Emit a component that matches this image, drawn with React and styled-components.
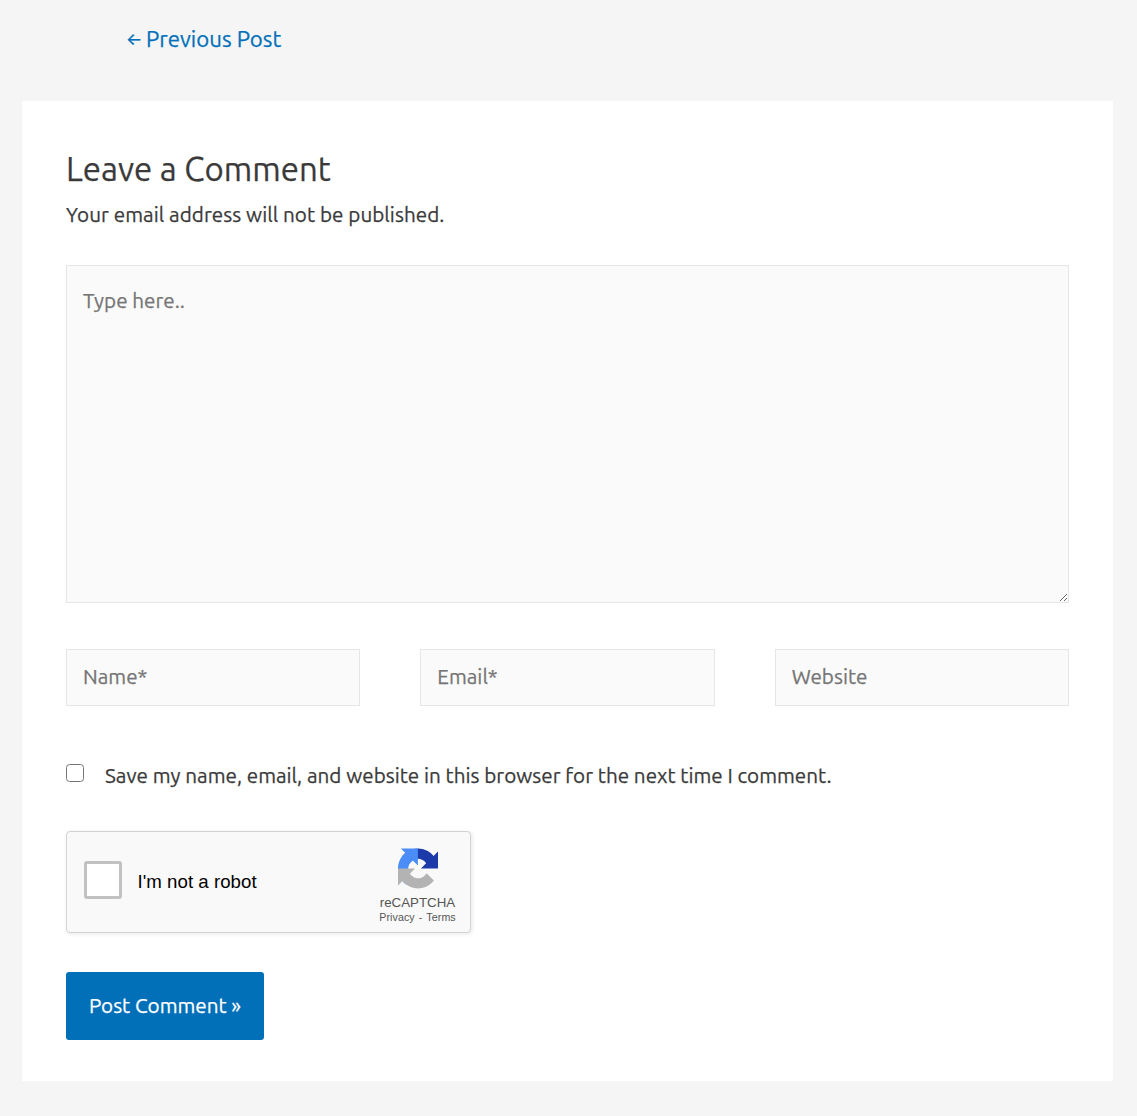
import React from "react";
import styled, { createGlobalStyle } from "styled-components";

const GlobalStyle = createGlobalStyle`
  *, *::before, *::after { box-sizing: border-box; }
  body {
    margin: 0;
    background: #f5f5f5;
    color: #3a3a3a;
    font-family: Ubuntu, "Noto Sans", sans-serif;
    font-size: 20.67px;
    line-height: 36px;
    -webkit-text-stroke: 0.25px;
  }
`;

const Page = styled.div`
  min-height: 1116px;
  padding: 20px 24px 35px 22px;
`;

const PostNavigation = styled.nav`
  height: 81px;
  padding-left: 104px;
`;

const PreviousLink = styled.a`
  display: flex;
  gap: 6px;
  color: #0170b9;
  font-size: 22.2px;
  line-height: 38px;
  letter-spacing: 0.03px;
  text-decoration: none;
  white-space: nowrap;
`;

const Arrow = styled.span`
  width: 14px;
  font-family: Inter, sans-serif;
  font-size: 17px;
`;

const Card = styled.section`
  height: 980px;
  padding: 46px 44px 41px;
  background: #fff;
`;

const Title = styled.h3`
  margin: 0 0 6px;
  font-size: 33px;
  font-weight: 400;
  line-height: 44px;
`;

const Notice = styled.p`
  margin: 0 0 32px;
  letter-spacing: 0.05px;
`;

const Form = styled.form`
  display: flex;
  flex-direction: column;
  align-items: flex-start;
`;

const fieldStyles = `
  width: 100%;
  border: 1px solid #e6e6e6;
  border-radius: 0;
  background: #fafafa;
  color: #666;
  font: inherit;
  outline: none;
  &::placeholder { color: #757575; opacity: 1; }
`;

const CommentBox = styled.textarea`
  ${fieldStyles}
  display: block;
  height: 338px;
  padding: 17px 16px;
  resize: vertical;
`;

const Fields = styled.div`
  display: grid;
  grid-template-columns: repeat(3, 1fr);
  gap: 60px;
  width: 100%;
  margin: 46px 0 52px;
`;

const TextField = styled.input`
  ${fieldStyles}
  height: 57px;
  padding: 0 16px 2px;
`;

const SaveLabel = styled.label`
  display: flex;
  align-items: flex-start;
  gap: 21px;
  letter-spacing: 0.01px;
  white-space: nowrap;
`;

const Checkbox = styled.input`
  width: 18px;
  height: 18px;
  margin: 6px 0 0;
  appearance: none;
  border: 1.5px solid #767676;
  border-radius: 3.5px;
  background: #fff;
`;

const Captcha = styled.div`
  display: flex;
  align-items: center;
  width: 405px;
  height: 102px;
  margin: 37px 0 39px;
  padding: 0 14px 0 17px;
  border: 1px solid #d3d3d3;
  border-radius: 4px;
  background: #f9f9f9;
  box-shadow: 1px 1px 4px rgba(0, 0, 0, 0.1);
  font-family: "Liberation Sans", Arial, sans-serif;
  -webkit-text-stroke: 0;
`;

const CaptchaCheck = styled.button`
  width: 38px;
  height: 38px;
  margin: 0 15.5px 4px 0;
  padding: 0;
  border: 3px solid #c1c1c1;
  border-radius: 3px;
  background: #fff;
`;

const CaptchaText = styled.span`
  flex: 1;
  color: #000;
  font-size: 18.67px;
  line-height: 24px;
  letter-spacing: 0.03px;
`;

const Brand = styled.div`
  display: flex;
  flex-direction: column;
  align-items: center;
  width: 77px;
  padding-top: 7px;
  color: #555;
`;

const BrandLogo = styled.svg`
  width: 40px;
  height: 41px;
`;

const BrandName = styled.span`
  margin-top: 6px;
  font-size: 13.33px;
  line-height: 16px;
`;

const BrandLinks = styled.span`
  display: flex;
  gap: 4px;
  font-size: 10.67px;
  line-height: 13px;
  letter-spacing: 0.08px;
  white-space: nowrap;
`;

const SubmitButton = styled.button`
  width: 198px;
  height: 68px;
  padding: 0;
  border: 0;
  border-radius: 3px;
  background: #0170b9;
  color: #fff;
  font: inherit;
  white-space: nowrap;
`;

const fields = [
  { name: "author", placeholder: "Name*" },
  { name: "email", placeholder: "Email*" },
  { name: "url", placeholder: "Website" },
];

function RecaptchaLogo() {
  return (
    <BrandLogo viewBox="0 0 64 64" aria-hidden="true">
      <path fill="#1c3aa9" d="M64 31.955l-.033-1.37V4.687l-7.16 7.16C50.948 4.674 42.033.093 32.05.093c-10.4 0-19.622 4.96-25.458 12.64l11.736 11.86a15.55 15.55 0 0 1 4.754-5.334c2.05-1.6 4.952-2.906 8.968-2.906.485 0 .86.057 1.135.163 4.976.393 9.288 3.14 11.828 7.124l-8.307 8.307L64 31.953" />
      <path fill="#4a8df6" d="M31.862.094l-1.37.033H4.594l7.16 7.16C4.58 13.147 0 22.06 0 32.046c0 10.4 4.96 19.622 12.64 25.458L24.5 45.768a15.55 15.55 0 0 1-5.334-4.754c-1.6-2.05-2.906-4.952-2.906-8.968 0-.485.057-.86.163-1.135.393-4.976 3.14-9.288 7.124-11.828l8.307 8.307L31.86.095" />
      <path fill="#b3b3b3" d="M.001 32.045l.033 1.37v25.898l7.16-7.16c5.86 7.173 14.774 11.754 24.76 11.754 10.4 0 19.622-4.96 25.458-12.64l-11.736-11.86a15.55 15.55 0 0 1-4.754 5.334c-2.05 1.6-4.952 2.906-8.968 2.906-.485 0-.86-.057-1.135-.163-4.976-.393-9.288-3.14-11.828-7.124l8.307-8.307c-10.522.04-22.4.066-27.295-.005" />
    </BrandLogo>
  );
}

export default function App() {
  return (
    <>
      <GlobalStyle />
      <Page>
        <PostNavigation>
          <PreviousLink href="#">
            <Arrow>←</Arrow> Previous Post
          </PreviousLink>
        </PostNavigation>
        <Card>
          <Title>Leave a Comment</Title>
          <Notice>Your email address will not be published.</Notice>
          <Form onSubmit={(e) => e.preventDefault()}>
            <CommentBox placeholder="Type here.." />
            <Fields>
              {fields.map((f) => (
                <TextField key={f.name} name={f.name} placeholder={f.placeholder} />
              ))}
            </Fields>
            <SaveLabel>
              <Checkbox type="checkbox" />
              <span>Save my name, email, and website in this browser for the next time I comment.</span>
            </SaveLabel>
            <Captcha>
              <CaptchaCheck type="button" aria-label="I'm not a robot" />
              <CaptchaText>I'm not a robot</CaptchaText>
              <Brand>
                <RecaptchaLogo />
                <BrandName>reCAPTCHA</BrandName>
                <BrandLinks>
                  <span>Privacy</span>
                  <span>-</span>
                  <span>Terms</span>
                </BrandLinks>
              </Brand>
            </Captcha>
            <SubmitButton type="submit">Post Comment »</SubmitButton>
          </Form>
        </Card>
      </Page>
    </>
  );
}
